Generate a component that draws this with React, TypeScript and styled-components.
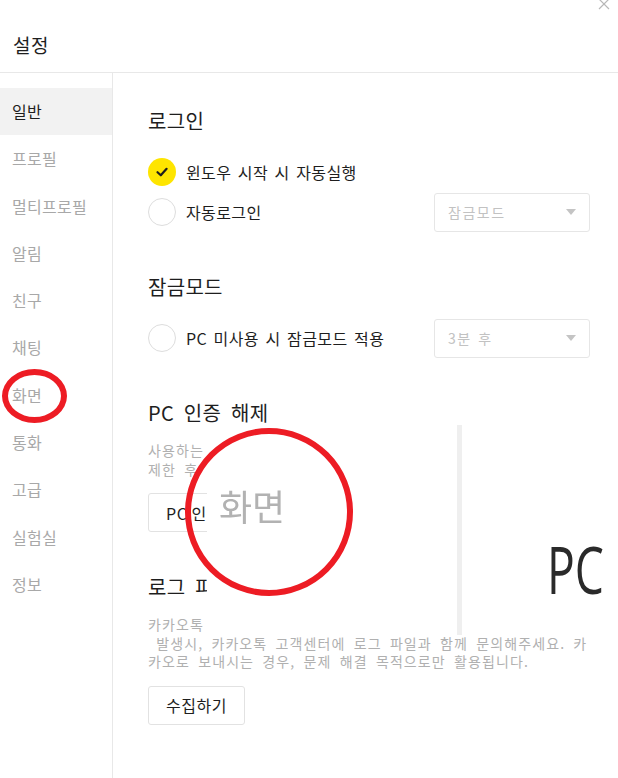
import styled, { createGlobalStyle } from 'styled-components';

const GlobalStyle = createGlobalStyle`
  html, body {
    margin: 0;
    padding: 0;
    background: #fff;
  }
  body {
    font-family: "Noto Sans CJK KR", "Noto Sans", sans-serif;
    color: #1e1e1e;
  }
`;

const menu = ['일반', '프로필', '멀티프로필', '알림', '친구', '채팅', '화면', '통화', '고급', '실험실', '정보'];

const CheckIcon = () => (
  <svg width="14" height="14" viewBox="0 0 14 14">
    <polyline points="2.5,7.2 5.8,10.3 11.6,3.8" fill="none" stroke="#1e1e1e" strokeWidth="2.2" strokeLinecap="round" strokeLinejoin="round" />
  </svg>
);

const CloseIcon = () => (
  <svg width="12" height="12" viewBox="0 0 12 12">
    <path d="M1 1 L11 11 M11 1 L1 11" stroke="#b8b8b8" strokeWidth="1.2" />
  </svg>
);

const Option = ({ label, checked, select }: { label: string; checked?: boolean; select?: string }) => (
  <OptionRow>
    <Check>
      <Circle $checked={checked}>{checked && <CheckIcon />}</Circle>
      {label}
    </Check>
    {select && (
      <Select>
        {select}
        <Caret />
      </Select>
    )}
  </OptionRow>
);

const App = () => {
  return (
    <Page>
      <GlobalStyle />
      <Header>
        <Title>설정</Title>
        <Close>
          <CloseIcon />
        </Close>
      </Header>
      <Body>
        <Sidebar>
          {menu.map((m) => (
            <MenuItem key={m} $active={m === '일반'}>
              {m}
            </MenuItem>
          ))}
        </Sidebar>
        <Content>
          <Section>
            <SectionTitle>로그인</SectionTitle>
            <Options>
              <Option label="윈도우 시작 시 자동실행" checked />
              <Option label="자동로그인" select="잠금모드" />
            </Options>
          </Section>
          <Section>
            <SectionTitle>잠금모드</SectionTitle>
            <Options>
              <Option label="PC 미사용 시 잠금모드 적용" select="3분 후" />
            </Options>
          </Section>
          <Section>
            <SectionTitle>PC 인증 해제</SectionTitle>
            <Desc>{'사용하는 PC의 인증을\n제한 후 다시'}</Desc>
            <ActionButton>PC 인증</ActionButton>
          </Section>
          <Section>
            <SectionTitle>로그 파일</SectionTitle>
            <Desc>
              {'카카오톡 이용 중\n 발생시, 카카오톡 고객센터에 로그 파일과 함께 문의해주세요. 카\n카오로 보내시는 경우, 문제 해결 목적으로만 활용됩니다.'}
            </Desc>
            <ActionButton>수집하기</ActionButton>
          </Section>
        </Content>
      </Body>

      <Patch>
        <ZoomLabel>화면</ZoomLabel>
        <PatchDivider />
        <BigPC>PC</BigPC>
      </Patch>
      <Ring $left={185} $top={428} $w={168} $h={168} />
      <Ring $left={2} $top={369} $w={65} $h={54} />
    </Page>
  );
};

const Page = styled.div`
  position: relative;
  width: 618px;
  height: 778px;
  overflow: hidden;
  display: flex;
  flex-direction: column;
  background: #fff;
`;
const Header = styled.div`
  height: 72px;
  flex-shrink: 0;
  display: flex;
  justify-content: space-between;
  align-items: flex-start;
  border-bottom: 1px solid #e8e8e8;
`;
const Title = styled.h1`
  margin: 0;
  padding: 33px 0 0 13px;
  font-size: 19px;
  line-height: 24px;
  font-weight: 400;
  letter-spacing: 0.5px;
`;
const Close = styled.div`
  margin: -2px 8px 0 0;
  display: flex;
`;
const Body = styled.div`
  flex: 1;
  display: flex;
`;
const Sidebar = styled.div`
  width: 112px;
  flex-shrink: 0;
  padding-top: 15px;
  border-right: 1px solid #e8e8e8;
`;
const MenuItem = styled.div<{ $active?: boolean }>`
  height: 47.3px;
  line-height: 47.3px;
  padding-left: 12px;
  font-size: 16px;
  letter-spacing: 0.3px;
  color: ${(p) => (p.$active ? '#1e1e1e' : '#a8a8a8')};
  background: ${(p) => (p.$active ? '#f2f2f2' : 'transparent')};
`;
const Content = styled.div`
  flex: 1;
  padding: 36px 28px 0 35px;
`;
const Section = styled.div`
  & + & {
    margin-top: 43px;
  }
`;
const SectionTitle = styled.h2`
  margin: 0 0 16px;
  font-size: 20px;
  line-height: 24px;
  font-weight: 400;
  letter-spacing: 0.3px;
  word-spacing: 5px;
  color: #1e1e1e;
`;
const Options = styled.div`
  padding-top: 3px;
  display: flex;
  flex-direction: column;
`;
const OptionRow = styled.div`
  height: 40px;
  display: flex;
  align-items: center;
  justify-content: space-between;
`;
const Check = styled.div`
  display: flex;
  align-items: center;
  gap: 10px;
  font-size: 16px;
  letter-spacing: 0.4px;
  word-spacing: 2.5px;
  color: #1e1e1e;
`;
const Circle = styled.span<{ $checked?: boolean }>`
  width: 28px;
  height: 28px;
  box-sizing: border-box;
  border-radius: 50%;
  display: flex;
  align-items: center;
  justify-content: center;
  background: ${(p) => (p.$checked ? '#fee500' : '#fff')};
  border: ${(p) => (p.$checked ? 'none' : '1.5px solid #dddddd')};
`;
const Select = styled.div`
  width: 156px;
  height: 39px;
  box-sizing: border-box;
  border: 1px solid #e6e6e6;
  border-radius: 3px;
  padding: 0 13px 0 13px;
  display: flex;
  align-items: center;
  justify-content: space-between;
  font-size: 14px;
  letter-spacing: 1.5px;
  word-spacing: 2px;
  color: #c2c2c2;
`;
const Caret = styled.span`
  width: 0;
  height: 0;
  border-left: 5px solid transparent;
  border-right: 5px solid transparent;
  border-top: 6px solid #c4c4c4;
`;
const Desc = styled.p`
  margin: 0;
  font-size: 14px;
  line-height: 18.5px;
  letter-spacing: 1.1px;
  word-spacing: 4px;
  white-space: pre;
  color: #b0b0b0;
`;
const ActionButton = styled.button`
  display: block;
  margin-top: 15px;
  height: 39px;
  padding: 0 17px;
  box-sizing: border-box;
  border: 1px solid #e2e2e2;
  border-radius: 3px;
  background: #fff;
  font-family: inherit;
  font-size: 16px;
  letter-spacing: 0.5px;
  color: #1e1e1e;
`;
const Patch = styled.div`
  position: absolute;
  left: 207px;
  top: 425px;
  width: 411px;
  height: 210px;
  background: #fff;
`;
const ZoomLabel = styled.span`
  position: absolute;
  left: 12px;
  top: 62px;
  font-size: 36px;
  line-height: 1;
  color: #b2b2b2;
  filter: blur(0.4px);
`;
const PatchDivider = styled.div`
  position: absolute;
  left: 250px;
  top: 0;
  width: 5px;
  height: 210px;
  background: #efefef;
`;
const BigPC = styled.span`
  position: absolute;
  left: 340px;
  top: 110px;
  font-family: "Open Sans", sans-serif;
  font-size: 66px;
  line-height: 1;
  color: #2a2a2a;
  transform: scaleX(0.7);
  transform-origin: left top;
`;
const Ring = styled.div<{ $left: number; $top: number; $w: number; $h: number }>`
  position: absolute;
  left: ${(p) => p.$left}px;
  top: ${(p) => p.$top}px;
  width: ${(p) => p.$w}px;
  height: ${(p) => p.$h}px;
  box-sizing: border-box;
  border: 6.5px solid #ed1c24;
  border-radius: 50%;
`;

export default App;
